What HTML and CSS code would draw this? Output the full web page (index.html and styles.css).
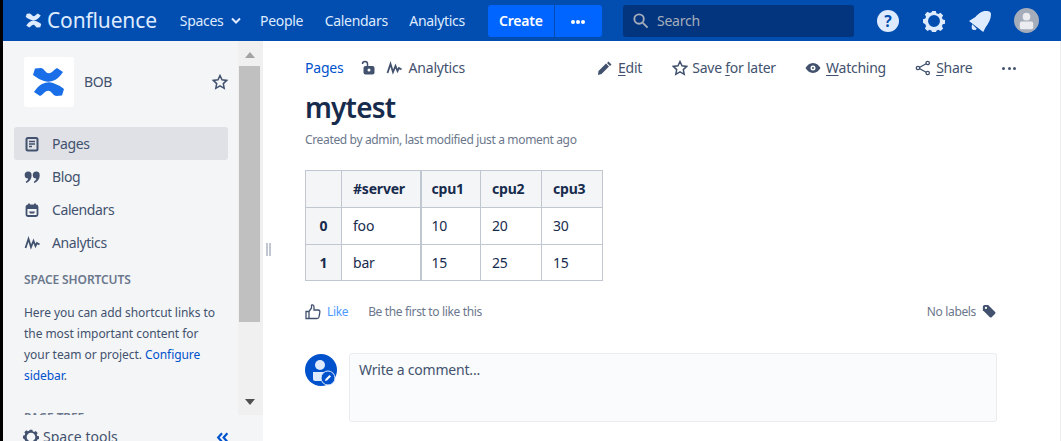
FILE: index.html
```html
<!DOCTYPE html>
<html lang="en">
<head>
	<meta charset="utf-8">
	<title>mytest - BOB - Confluence</title>
	<link rel="stylesheet" href="styles.css">
</head>
<body>
<div class="app">
	<header class="topbar">
		<a class="brand">
			<svg class="brand-mark" viewBox="8 10 33 30"><path class="logo-w" d="M11 11.500L17 11Q19 11 21 14Q24 18 28 15Q31 12 33 11L39 15Q35 21 31 23Q25 26 20 24Q14 22 9 18Z"/><path class="logo-w" d="M38 38.500L32 39Q30 39 28 36Q25 32 21 35Q18 38 16 39L10 35Q14 29 18 27Q24 24 29 26Q35 28 40 32Z"/></svg>
			<span class="brand-name">Confluence</span>
		</a>
		<nav class="topnav">
			<a class="topnav-item">Spaces <svg class="caret" viewBox="0 0 10 8"><path d="M1 1.500l4 4 4-4" /></svg></a>
			<a class="topnav-item">People</a>
			<a class="topnav-item">Calendars</a>
			<a class="topnav-item">Analytics</a>
		</nav>
		<div class="create-group">
			<button class="create-btn">Create</button>
			<button class="create-more"><span class="dots"><i></i><i></i><i></i></span></button>
		</div>
		<div class="search">
			<svg class="search-icon" viewBox="0 0 18 18"><circle cx="7.500" cy="7.500" r="5"/><path d="M11.500 11.500l5 5"/></svg>
			<span>Search</span>
		</div>
		<div class="top-icons">
			<svg class="top-icon" viewBox="0 0 24 24"><circle cx="12" cy="12" r="12" fill="#deebff"/><text x="12" y="18" class="help-mark">?</text></svg>
			<svg class="top-icon" viewBox="0 0 24 24"><path fill="#deebff" fill-rule="evenodd" d="M10 1h4l.6 2.500 2.100.9 2.400-1.400 2.900 2.900-1.400 2.400.9 2.100 2.500.6v4l-2.500.6-.9 2.100 1.400 2.400-2.900 2.900-2.400-1.400-2.100.9-.6 2.500h-4l-.6-2.500-2.100-.9-2.400 1.400-2.900-2.900 1.400-2.400-.9-2.100L0 14v-4l2.500-.6.9-2.100L2 4.900 4.900 2l2.400 1.400 2.100-.9zM12 5.500a6.500 6.500 0 1 0 0 13 6.500 6.500 0 0 0 0-13z"/></svg>
			<svg class="top-icon" viewBox="0 0 24 24"><path fill="#deebff" d="M0 12l7-4.500C10 4 14 1 18 1c3 0 6 .5 6 3.500 0 5-2.500 10-6 14.500l-2.500 5z"/><path fill="#deebff" d="M3.500 15.500l5 5c-1.500 2.500-5 1.500-5.500-1-.2-1.500 0-3 .5-4z"/></svg>
			<svg class="top-icon avatar" viewBox="0 0 26 26"><circle cx="13" cy="13" r="13" fill="#a5adba"/><circle cx="13" cy="9" r="4" fill="#ebecf0"/><rect x="6" y="14" width="14" height="8" rx="2" fill="#ebecf0"/></svg>
		</div>
	</header>

	<div class="workspace">
		<aside class="sidebar">
			<div class="sidebar-scroll">
				<div class="sidebar-content">
					<div class="space-head">
						<div class="space-logo">
							<svg viewBox="0 0 50 50"><path class="logo-b" d="M11 11.500L17 11Q19 11 21 14Q24 18 28 15Q31 12 33 11L39 15Q35 21 31 23Q25 26 20 24Q14 22 9 18Z"/><path class="logo-b" d="M38 38.500L32 39Q30 39 28 36Q25 32 21 35Q18 38 16 39L10 35Q14 29 18 27Q24 24 29 26Q35 28 40 32Z"/></svg>
						</div>
						<span class="space-name">BOB</span>
						<svg class="icon-16 star" viewBox="0 0 16 16"><path d="M8 1.500l2 4.300 4.700.6-3.400 3.200.9 4.700L8 11.900l-4.200 2.400.9-4.700L1.300 6.400 6 5.800z"/></svg>
					</div>
					<ul class="side-nav">
						<li class="side-item is-active">
							<svg class="icon-16" viewBox="0 0 16 16"><rect x="2.500" y="2" width="11" height="12.500" rx="1.500" fill="none" stroke="#42526e" stroke-width="2"/><path d="M5 5.500h6M5 8h6M5 10.500h3" stroke="#42526e" stroke-width="1.300"/></svg>
							Pages
						</li>
						<li class="side-item">
							<svg class="icon-16" viewBox="0 0 16 16"><path fill="#42526e" d="M4.200 2.500a3.600 3.600 0 0 1 3.400 3.800c0 3.700-2.200 6.700-5.300 7.700l-.6-1.200c1.400-.7 2.300-2 2.500-3.200A3.400 3.400 0 0 1 4.200 2.500zM12.300 2.500a3.600 3.600 0 0 1 3.400 3.800c0 3.700-2.200 6.700-5.300 7.700l-.6-1.200c1.400-.7 2.300-2 2.500-3.200a3.400 3.400 0 0 1 0-7.100z"/></svg>
							Blog
						</li>
						<li class="side-item">
							<svg class="icon-16" viewBox="0 0 16 16"><rect x="2.500" y="3.500" width="11" height="10.500" rx="1.500" fill="none" stroke="#42526e" stroke-width="1.800"/><path d="M5 1.500v3M11 1.500v3" stroke="#42526e" stroke-width="1.800"/><path d="M2 4h12v3H2zM5 9.500h6l-1 2H6z" fill="#42526e"/></svg>
							Calendars
						</li>
						<li class="side-item">
							<svg class="icon-16 wave-icon" viewBox="0 0 16 16"><path class="wave" d="M1 13L4 4l2.500 8L9 6l2 5 1.500-3 2.500 1.500"/></svg>
							Analytics
						</li>
					</ul>
					<h5 class="side-heading">SPACE SHORTCUTS</h5>
					<p class="side-note">Here you can add shortcut links to the most important content for your team or project. <a>Configure sidebar</a>.</p>
					<h5 class="side-heading next">PAGE TREE</h5>
				</div>
				<div class="scrollbar">
					<span class="arrow up"></span>
					<span class="thumb"></span>
					<span class="arrow down"></span>
				</div>
			</div>
			<div class="side-foot">
				<svg class="icon-16 gear" viewBox="0 0 24 24"><path fill="#42526e" fill-rule="evenodd" d="M10 1h4l.6 2.500 2.100.9 2.400-1.400 2.900 2.900-1.400 2.400.9 2.100 2.500.6v4l-2.500.6-.9 2.100 1.400 2.400-2.900 2.900-2.400-1.400-2.100.9-.6 2.500h-4l-.6-2.500-2.100-.9-2.400 1.400-2.900-2.900 1.400-2.400-.9-2.100L0 14v-4l2.500-.6.9-2.100L2 4.900 4.900 2l2.400 1.400 2.100-.9zM12 5.500a6.500 6.500 0 1 0 0 13 6.500 6.500 0 0 0 0-13z"/></svg>
				<span>Space tools</span>
				<svg class="collapse" viewBox="0 0 12 10"><path d="M5.500 1L2 5l3.500 4M10.500 1L7 5l3.500 4"/></svg>
			</div>
		</aside>
		<div class="splitter"><i></i><i></i></div>

		<main class="content">
			<div class="page-top">
				<div class="crumbs">
					<a>Pages</a>
					<svg class="icon-16 lock" viewBox="0 0 16 16"><path d="M2.500 4C2.500 .8 7.500 .8 7.500 4v3" fill="none" stroke="#42526e" stroke-width="1.500"/><rect x="3.500" y="6" width="11" height="8.500" rx="2" fill="#42526e"/><circle cx="9" cy="10" r="1.500" fill="#fff"/></svg>
					<svg class="icon-16 wave-icon" viewBox="0 0 16 16"><path class="wave" d="M1 13L4 4l2.500 8L9 6l2 5 1.500-3 2.500 1.500"/></svg>
					<span class="crumb-text">Analytics</span>
				</div>
				<div class="actions">
					<span class="action">
						<svg class="icon-16" viewBox="0 0 16 16"><path fill="#42526e" d="M11.500 1.500l3 3-1.500 1.500-3-3zM9 3.500l3 3-7.500 7.500-3.500 1 .5-4z"/></svg>
						<span><u>E</u>dit</span>
					</span>
					<span class="action">
						<svg class="icon-16 star" viewBox="0 0 16 16"><path d="M8 1.500l2 4.300 4.700.6-3.400 3.200.9 4.700L8 11.900l-4.200 2.400.9-4.700L1.300 6.400 6 5.800z"/></svg>
						<span>Save <u>f</u>or later</span>
					</span>
					<span class="action">
						<svg class="icon-16" viewBox="0 0 16 16"><path fill="#42526e" fill-rule="evenodd" d="M8 3c3.500 0 6 2.500 7.500 5C14 10.500 11.500 13 8 13S2 10.500.5 8C2 5.500 4.500 3 8 3zm0 2.500a2.500 2.500 0 1 0 0 5 2.500 2.500 0 0 0 0-5zM8 7a1 1 0 1 1 0 2 1 1 0 0 1 0-2z"/></svg>
						<span><u>W</u>atching</span>
					</span>
					<span class="action">
						<svg class="icon-16" viewBox="0 0 16 16"><path d="M12.500 3L3.500 8l9 5" fill="none" stroke="#42526e" stroke-width="1.300"/><circle cx="12.700" cy="3" r="1.700" fill="#fff" stroke="#42526e" stroke-width="1.300"/><circle cx="3" cy="8" r="1.700" fill="#fff" stroke="#42526e" stroke-width="1.300"/><circle cx="12.700" cy="13" r="1.700" fill="#fff" stroke="#42526e" stroke-width="1.300"/></svg>
						<span><u>S</u>hare</span>
					</span>
					<span class="dots dark"><i></i><i></i><i></i></span>
				</div>
			</div>
			<h1 class="page-title">mytest</h1>
			<p class="byline">Created by admin, last modified just a moment ago</p>

			<table class="data">
				<thead>
					<tr><th class="col-idx"></th><th class="col-name">#server</th><th class="col-n1">cpu1</th><th class="col-n2">cpu2</th><th class="col-n3">cpu3</th></tr>
				</thead>
				<tbody>
					<tr><th>0</th><td class="col-name">foo</td><td>10</td><td>20</td><td>30</td></tr>
					<tr><th>1</th><td class="col-name">bar</td><td>15</td><td>25</td><td>15</td></tr>
				</tbody>
			</table>

			<div class="like-row">
				<svg class="icon-16 thumb-up" viewBox="0 0 16 16"><path d="M1 7.500h3v7H1zM4 7.500l2.500-3.500V1.500c0-1 2.500-1 2.500 1.500v3h4c2 0 2 1.500 1.800 2.500l-.8 4.500c-.2 1-1 1.500-2 1.500H4"/></svg>
				<a class="like">Like</a>
				<span class="like-note">Be the first to like this</span>
				<span class="labels">No labels</span>
				<svg class="icon-16 tag" viewBox="0 0 16 16"><path fill="#42526e" d="M1 3c0-1 1-2 2-2h4l8 8c.5.5.5 1.500 0 2l-4 4c-.5.5-1.500.5-2 0L1 7z"/><circle cx="4.500" cy="4.500" r="1.300" fill="#fff"/></svg>
			</div>

			<div class="comment-row">
				<svg class="comment-avatar" viewBox="0 0 32 32"><circle cx="16" cy="16" r="16" fill="#0052cc"/><circle cx="15" cy="11" r="5" fill="#deebff"/><path fill="#deebff" d="M8 18h14c1 0 2 1 2 2v7H10c-1 0-2-1-2-2z"/><circle cx="23" cy="24" r="7" fill="#0052cc" stroke="#deebff" stroke-width="1"/><path d="M20 27l.5-2 4-4 1.500 1.500-4 4z" fill="#fff"/></svg>
				<div class="comment-box">Write a comment...</div>
			</div>
		</main>
	</div>
</div>
</body>
</html>
```

FILE: styles.css
```css
* { box-sizing: border-box; }
html, body { height: 100%; margin: 0; overflow: hidden; }
body { background: #000; font: 14px/20px "Noto Sans", "Open Sans", sans-serif; color: #172b4d; padding-left: 3px; }
a { cursor: pointer; }
u { text-underline-offset: 2px; }
ul { list-style: none; margin: 0; padding: 0; }

.app { display: flex; flex-direction: column; height: 441px; background: #fff; }

/* top bar */
.topbar { display: flex; align-items: center; height: 41px; flex: none; background: #024db0; color: #deebff; }
.brand { display: flex; align-items: center; margin-left: 22px; }
.brand-mark { width: 17px; height: 15px; }
.logo-w { fill: #deebff; }
.brand-name { font-size: 21px; margin-left: 5px; line-height: 41px; color: #deebff; letter-spacing: -.15px; }
.topnav { display: flex; margin-left: 23px; gap: 21.5px; }
.topnav-item { display: flex; align-items: center; gap: 7px; letter-spacing: -.3px; }
.caret { width: 10px; height: 8px; margin-right: -2px; fill: none; stroke: #deebff; stroke-width: 2; }
.create-group { display: flex; height: 32px; margin-left: 23px; }
.create-group button { border: 0; background: #0065ff; color: #fff; height: 32px; font: 600 14px "Noto Sans", sans-serif; padding: 0; }
.create-btn { width: 66px; border-radius: 3px 0 0 3px; margin-right: 1px; letter-spacing: -.2px; }
.create-more { width: 47px; border-radius: 0 3px 3px 0; }
.dots { display: inline-flex; gap: 1px; vertical-align: middle; }
.dots i { width: 4px; height: 4px; border-radius: 50%; background: #fff; }
.dots.dark { gap: 2.5px; }
.dots.dark i { width: 3px; height: 3px; background: #42526e; }
.search { display: flex; align-items: center; width: 231px; height: 32px; margin-left: 21px; border-radius: 3px; background: #03357f; color: #a5adba; padding-left: 9px; letter-spacing: -.2px; }
.search-icon { width: 17px; height: 17px; margin-right: 8px; fill: none; stroke: #a5adba; stroke-width: 2; }
.top-icons { display: flex; align-items: center; gap: 22px; margin-left: 23px; }
.top-icon { width: 22px; height: 22px; }
.top-icons .top-icon { margin-right: 2px; }
.top-icon.avatar { width: 25px; height: 25px; margin-left: -1px; }
.help-mark { font: 700 17px "Noto Sans", sans-serif; fill: #024db0; text-anchor: middle; }

/* sidebar */
.workspace { display: flex; flex: 1; min-height: 0; border-right: 1px solid #ededed; }
.sidebar { display: flex; flex-direction: column; width: 260px; flex: none; background: #f4f5f7; color: #42526e; }
.sidebar-scroll { display: flex; flex: 1; min-height: 0; }
.sidebar-content { width: 235px; flex: none; overflow: hidden; padding: 16px 10px 0 11px; }
.scrollbar { display: flex; flex-direction: column; align-items: center; width: 25px; background: #f0f0f0; padding: 11px 2px 0 0; }
.scrollbar .thumb { width: 21px; height: 256px; flex: none; margin-top: 8px; background: #c0c0c0; }
.arrow { width: 0; height: 0; flex: none; border-left: 5px solid transparent; border-right: 5px solid transparent; }
.arrow.up { border-bottom: 6px solid #a3a3a3; }
.arrow.down { margin-top: 77px; border-top: 6px solid #505050; }
.space-head { display: flex; align-items: center; height: 50px; padding-left: 10px; }
.space-logo { display: flex; width: 50px; height: 50px; border-radius: 3px; background: #fff; }
.space-logo svg { width: 50px; height: 50px; }
.logo-b { fill: #1a6ee8; }
.space-name { margin-left: 10px; flex: 1; letter-spacing: -.35px; }
.icon-16 { width: 16px; height: 16px; flex: none; }
.wave-icon { width: 17px; }
.star { fill: none; stroke: #42526e; stroke-width: 1.500; }
.side-nav { margin-top: 20px; }
.side-item { display: flex; align-items: center; gap: 12px; height: 33px; padding-left: 10px; border-radius: 3px; letter-spacing: -.4px; }
.side-item .wave-icon { margin-right: -1px; }
.side-item.is-active { background: #dfe1e6; }
.wave { fill: none; stroke: #42526e; stroke-width: 1.800; }
.side-heading { margin: 13px 0 0 10px; font-size: 12px; font-weight: 600; line-height: 16px; color: #6b778c; letter-spacing: -.1px; }
.side-heading.next { margin-top: 24px; }
.side-note { margin: 14px 0 0 10px; width: 200px; font-size: 12px; line-height: 21px; color: #42526e; letter-spacing: -.05px; }
.side-note a { color: #0052cc; }
.side-foot { display: flex; align-items: center; height: 26px; flex: none; padding: 18px 0 0 20px; font-size: 14px; }
.gear { margin-right: 4px; }
.collapse { width: 13px; height: 11px; margin-left: 98px; fill: none; stroke: #0052cc; stroke-width: 2; }

.splitter { display: flex; align-items: flex-start; gap: 1px; width: 42px; flex: none; padding: 202px 0 0 3px; }
.splitter i { width: 2px; height: 13px; background: #c1c7d0; }

/* page */
.content { flex: 1; min-width: 0; padding-right: 63px; }
.page-top { display: flex; align-items: center; justify-content: space-between; margin-top: 17px; height: 20px; }
.crumbs { display: flex; align-items: center; letter-spacing: -.2px; }
.crumbs a { color: #0052cc; }
.lock { margin: 0 10px 0 16px; }
.crumb-text { margin-left: 6px; color: #42526e; }
.actions { display: flex; align-items: center; color: #42526e; letter-spacing: -.25px; gap: 29.5px; margin-right: -19px; }
.action { display: flex; align-items: center; gap: 4.7px; }
.page-title { margin: 13px 0 0; font-size: 28px; line-height: 32px; font-weight: 600; letter-spacing: -.8px; }
.byline { margin: 9px 0 0; font-size: 12px; line-height: 16px; color: #6b778c; letter-spacing: -.35px; }

.data { margin-top: 22px; border-collapse: collapse; width: 297px; table-layout: fixed; }
.data tr { height: 37px; }
.data tbody tr:last-child { height: 36px; }
.data th, .data td { border: 1px solid #c1c7d0; padding: 0 11px; text-align: left; font-size: 14px; letter-spacing: -.2px; }
.data tr > :nth-child(3) { padding-left: 10px; }
.data th { background: #f4f5f7; font-weight: 700; }
.data tbody th { text-align: center; padding: 0; }
.col-idx { width: 36px; }
.col-name { width: 79px; border-right-width: 2px !important; }
.col-n1 { width: 60px; }
.col-n2 { width: 61px; }
.col-n3 { width: 61px; }

.like-row { display: flex; align-items: center; margin-top: 21px; height: 20px; font-size: 12px; color: #6b778c; letter-spacing: -.35px; }
.thumb-up { fill: none; stroke: #42526e; stroke-width: 1.300; margin-right: 6px; }
.like { color: #4c9aff; }
.like-note { margin-left: 20px; flex: 1; }
.labels { margin-right: 6px; }
.tag { width: 14px; height: 14px; margin: 0 1px 3px 0; }
.comment-row { display: flex; margin-top: 31px; gap: 12px; }
.comment-avatar { width: 32px; height: 32px; margin-top: 1px; flex: none; }
.comment-box { flex: 1; height: 69px; padding: 6px 9px; background: #fafbfc; border: 1px solid #ebecf0; border-radius: 3px; color: #42526e; letter-spacing: -.2px; }
```
